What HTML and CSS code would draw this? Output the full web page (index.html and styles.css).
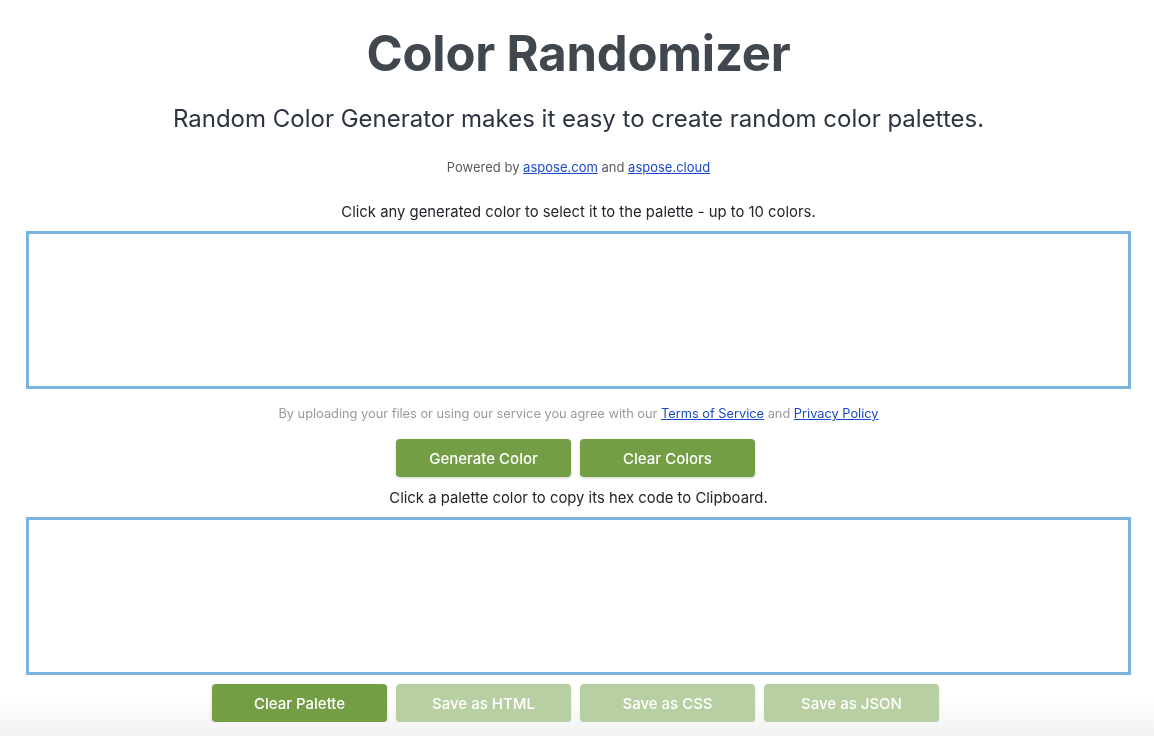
FILE: index.html
```html
<!DOCTYPE html>
<html lang="en">
<head>
<meta charset="utf-8">
<title>Color Randomizer</title>
<link rel="stylesheet" href="styles.css">
</head>
<body>
<main class="page">
  <h1 class="title">Color Randomizer</h1>
  <p class="subtitle">Random Color Generator makes it easy to create random color palettes.</p>
  <p class="powered">Powered by <a href="#">aspose.com</a> and <a href="#">aspose.cloud</a></p>
  <p class="hint">Click any generated color to select it to the palette - up to 10 colors.</p>
  <div class="colorbox"></div>
  <p class="terms">By uploading your files or using our service you agree with our <a href="#">Terms of Service</a> and <a href="#">Privacy Policy</a></p>
  <div class="btnrow">
    <button class="btn">Generate Color</button>
    <button class="btn">Clear Colors</button>
  </div>
  <p class="hint hint2">Click a palette color to copy its hex code to Clipboard.</p>
  <div class="colorbox colorbox2"></div>
  <div class="btnrow btnrow2">
    <button class="btn">Clear Palette</button>
    <button class="btn disabled">Save as HTML</button>
    <button class="btn disabled">Save as CSS</button>
    <button class="btn disabled">Save as JSON</button>
  </div>
</main>
<div class="bottomfade"></div>
</body>
</html>
```
FILE: styles.css
```css
html {
  margin: 0;
  padding: 0;
  background: #fff;
}
body {
  margin: 0;
  padding: 0;
  font-family: Inter, "Noto Sans", "Liberation Sans", sans-serif;
  color: #212529;
}
.page {
  display: flex;
  flex-direction: column;
  align-items: center;
  padding: 22px 23px 0 26px;
}
.title {
  margin: 0;
  font-size: 49px;
  line-height: 64px;
  font-weight: 700;
  color: #41474f;
  letter-spacing: -0.2px;
}
.subtitle {
  margin: 17px 0 0;
  font-size: 24px;
  line-height: 32px;
  color: #2c3440;
}
.powered {
  margin: 24px 0 0;
  font-size: 13px;
  line-height: 16px;
  color: #575c63;
}
.powered a, .terms a {
  color: #1a49c5;
}
.hint {
  margin: 28px 0 0;
  font-size: 14.85px;
  line-height: 18px;
  color: #212529;
}
.colorbox {
  align-self: stretch;
  height: 152px;
  margin-top: 10px;
  border: 3px solid #7ab3de;
  background: #fff;
}
.terms {
  margin: 17px 0 0;
  font-size: 12.8px;
  line-height: 16px;
  color: #979a9e;
}
.btnrow {
  display: flex;
  gap: 9px;
  margin-top: 17px;
  margin-right: 6px;
}
.btn {
  width: 175px;
  height: 38px;
  border: none;
  border-radius: 4px;
  background: #739e45;
  color: #fff;
  font-family: inherit;
  font-size: 15px;
  font-weight: 500;
  box-shadow: 0 1px 3px rgba(0,0,0,0.18);
  cursor: pointer;
}
.btn.disabled {
  background: #b8cea3;
  box-shadow: 0 1px 2px rgba(0,0,0,0.08);
}
.hint2 {
  margin-top: 12px;
}
.btnrow2 {
  margin-top: 9px;
}
.bottomfade {
  position: fixed;
  left: 0;
  right: 0;
  bottom: 0;
  height: 40px;
  z-index: -1;
  background: linear-gradient(to bottom, rgba(242,242,242,0), rgba(242,242,242,1));
  pointer-events: none;
}
```
